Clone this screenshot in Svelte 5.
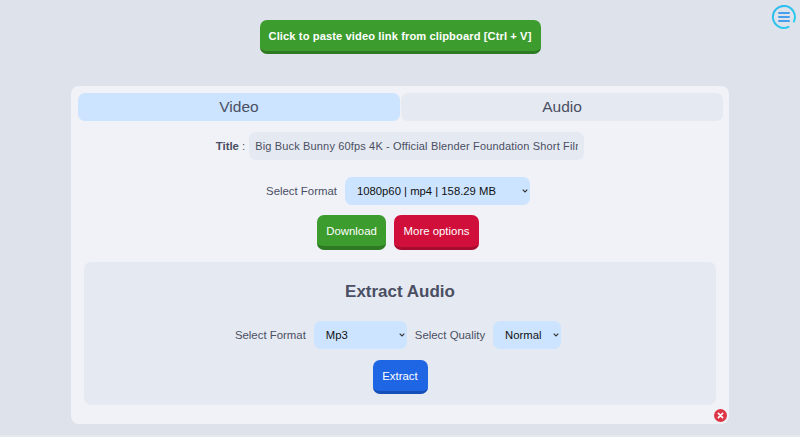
<script>
let tab = $state('video')
const title = 'Big Buck Bunny 60fps 4K - Official Blender Foundation Short Film'
</script>

<main>
	<button class="btn paste">Click to paste video link from clipboard [Ctrl + V]</button>

	<button class="menu" aria-label="Menu">
		<svg width="26" height="26" viewBox="0 0 26 26" fill="none">
			<defs>
				<linearGradient id="ring" x1="0" y1="0" x2="1" y2="1">
					<stop offset="0" stop-color="#2bb8ee" />
					<stop offset="1" stop-color="#2bd0ee" />
				</linearGradient>
			</defs>
			<path d="M17.5 22.9A11 11 0 1 1 22.9 17.5" stroke="url(#ring)" stroke-width="2" stroke-linecap="round" />
			<path d="M8 9h10M8 13h10M8 17h10" stroke="#459fec" stroke-width="2" stroke-linecap="round" />
		</svg>
	</button>

	<section class="card">
		<div class="tabs">
			<button class:active={tab === 'video'} onclick={() => (tab = 'video')}>Video</button>
			<button class:active={tab === 'audio'} onclick={() => (tab = 'audio')}>Audio</button>
		</div>

		<div class="row title-row">
			<label for="title"><b>Title</b> :</label>
			<input id="title" readonly value={title} />
		</div>

		<div class="row format-row">
			<label for="format">Select Format</label>
			<select id="format" class="format">
				<option>1080p60 | mp4 | 158.29 MB</option>
			</select>
		</div>

		<div class="row actions">
			<button class="btn download">Download</button>
			<button class="btn more">More options</button>
		</div>

		<div class="extract">
			<h2>Extract Audio</h2>
			<div class="row selects">
				<label for="afmt">Select Format</label>
				<select id="afmt" class="afmt"><option>Mp3</option></select>
				<label for="aq">Select Quality</label>
				<select id="aq" class="aq"><option>Normal</option></select>
			</div>
			<button class="btn go">Extract</button>
		</div>

		<button class="close" aria-label="Close">
			<svg width="13" height="13" viewBox="0 0 13 13">
				<circle cx="6.5" cy="6.5" r="6.5" fill="#dc3545" />
				<path d="M4.4 4.4l4.2 4.2M8.6 4.4l-4.2 4.2" stroke="#fff" stroke-width="1.7" stroke-linecap="round" />
			</svg>
		</button>
	</section>
</main>

<style>
:global(body) {
	background: #dde2eb;
	font-family: 'Liberation Sans', Arial, sans-serif;
}

main {
	position: relative;
	height: 437px;
	overflow: hidden;
	padding-top: 20px;
	box-sizing: border-box;
	border-bottom: 2px solid #e4e8ef;
	display: flex;
	flex-direction: column;
	align-items: center;
}

button {
	font-family: inherit;
	border: none;
	cursor: pointer;
}

.btn {
	color: #fff;
	border-radius: 7px;
	font-size: 11.4px;
	padding: 0;
	white-space: nowrap;
}

.paste {
	width: 281px;
	height: 34px;
	background: #3c9c2d;
	border-bottom: 3px solid #2d7a22;
	font-weight: 700;
	font-size: 11.15px;
	letter-spacing: 0.1px;
	flex: none;
}

.menu {
	position: absolute;
	top: 4px;
	right: 3px;
	padding: 0;
	background: none;
	display: flex;
}

.card {
	position: relative;
	margin-top: 32px;
	width: 658px;
	height: 338px;
	flex: none;
	box-sizing: border-box;
	background: #f0f2f7;
	border-radius: 8px;
	padding: 7px;
	display: flex;
	flex-direction: column;
	align-items: center;
}

.tabs {
	display: flex;
	gap: 1px;
	width: 645px;
	margin-right: -1px;
	align-self: flex-start;
}

.tabs button {
	flex: 1;
	height: 28px;
	border-radius: 7px;
	background: #e5e9f1;
	color: #4a4f63;
	font-size: 15.5px;
	padding: 0;
}

.tabs button.active {
	background: #cce4ff;
}

.row {
	display: flex;
	align-items: center;
	justify-content: center;
}

label {
	font-size: 11.4px;
	color: #4a4f63;
}

input,
select {
	font-family: inherit;
	font-size: 11.3px;
	border: none;
	outline: none;
	border-radius: 7px;
	box-sizing: border-box;
	height: 28px;
}

.title-row {
	margin-top: 11px;
	gap: 4px;
}

.title-row input {
	width: 335px;
	padding: 0 6px;
	background: #e5e9f1;
	color: #4a4f63;
	font-size: 11px;
	letter-spacing: 0.15px;
}

select {
	appearance: none;
	background-color: #cce4ff;
	background-image: url("data:image/svg+xml,%3Csvg xmlns='http://www.w3.org/2000/svg' width='6' height='4'%3E%3Cpath d='M.7.7 3 3l2.3-2.3' fill='none' stroke='%23333' stroke-width='1.1'/%3E%3C/svg%3E");
	background-repeat: no-repeat;
	background-position: right 2px center;
	color: #111;
	padding: 0 10px 0 12px;
}

/* these rows sit 2px left of centre in the original */
.format-row,
.actions,
.selects {
	padding-right: 4px;
}

.format-row {
	margin-top: 17px;
	gap: 8px;
}

.format {
	width: 185px;
}

.actions {
	margin-top: 10px;
	gap: 8px;
}

.download {
	width: 69px;
	height: 35px;
	background: #3c9c2d;
	border-bottom: 4px solid #2d7a22;
}

.more {
	width: 85px;
	height: 35px;
	background: #d0103a;
	border-bottom: 3px solid #a50c2e;
}

.extract {
	margin-top: 12px;
	width: 632px;
	height: 143px;
	flex: none;
	background: #e5e9f1;
	border-radius: 7px;
	display: flex;
	flex-direction: column;
	align-items: center;
}

h2 {
	margin: 20px 0 0;
	font-size: 17px;
	line-height: 20px;
	font-weight: 700;
	color: #4a4f63;
}

.selects {
	margin-top: 19px;
	gap: 8px;
}

.afmt {
	width: 93px;
}

.aq {
	width: 68px;
}

.go {
	margin-top: 11px;
	width: 55px;
	height: 34px;
	background: #1f66e5;
	border-bottom: 3px solid #1550b8;
}

.close {
	position: absolute;
	right: 2px;
	bottom: 2px;
	padding: 0;
	background: none;
	display: flex;
}
</style>
